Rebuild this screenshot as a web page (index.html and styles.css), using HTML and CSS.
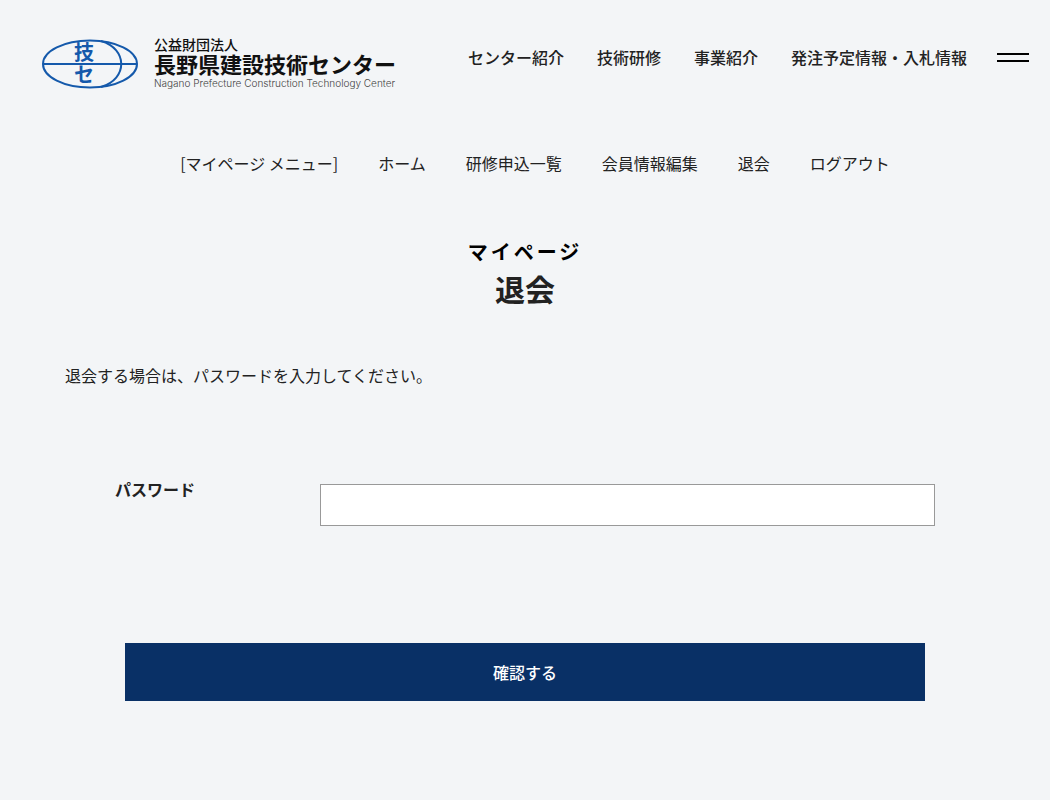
FILE: index.html
```html
<!DOCTYPE html>
<html lang="ja">
<head>
<meta charset="utf-8">
<meta name="viewport" content="width=device-width, initial-scale=1">
<title>退会 | マイページ</title>
<link rel="stylesheet" href="styles.css">
</head>
<body>
<header class="header">
  <a class="logo" href="#">
    <svg class="logo-mark" viewBox="0 0 98 50" width="98" height="50" aria-hidden="true">
      <g fill="none" stroke="#1459ab" stroke-width="2">
        <ellipse cx="49" cy="25" rx="47" ry="23.5"/>
        <path d="M2 25H96"/>
        <path d="M60 2C87 10 87 40 60 48"/>
      </g>
      <text class="logo-char" x="43" y="21">技</text>
      <text class="logo-char" x="43" y="43">セ</text>
    </svg>
    <span class="logo-text">
      <span class="logo-type">公益財団法人</span>
      <span class="logo-name">長野県建設技術センター</span>
      <span class="logo-en">Nagano Prefecture Construction Technology Center</span>
    </span>
  </a>
  <nav class="global-nav" aria-label="メイン">
    <a href="#">センター紹介</a>
    <a href="#">技術研修</a>
    <a href="#">事業紹介</a>
    <a href="#">発注予定情報・入札情報</a>
  </nav>
  <button class="menu-button" type="button" aria-label="メニュー"><span></span><span></span></button>
</header>
<nav class="mypage-nav" aria-label="マイページ">
  <span>[マイページ メニュー]</span>
  <a href="#">ホーム</a>
  <a href="#">研修申込一覧</a>
  <a href="#">会員情報編集</a>
  <a href="#">退会</a>
  <a href="#">ログアウト</a>
</nav>
<main class="main">
  <div class="heading">
    <p class="heading-sub">マイページ</p>
    <h1 class="heading-title">退会</h1>
  </div>
  <p class="lead">退会する場合は、パスワードを入力してください。</p>
  <form class="form">
    <div class="field">
      <label class="field-label" for="password">パスワード</label>
      <input class="field-input" id="password" type="password">
    </div>
    <button class="submit" type="submit">確認する</button>
  </form>
</main>
</body>
</html>
```
FILE: styles.css
```css
* {
  box-sizing: border-box;
}

body {
  margin: 0;
  background: #f3f5f7;
  color: #222;
  font-family: "Noto Sans CJK JP", sans-serif;
  font-size: 16px;
  line-height: 24px;
}

a {
  color: inherit;
  text-decoration: none;
}

p,
h1 {
  margin: 0;
}

.header {
  display: flex;
  align-items: flex-start;
  padding: 38px 21px 0 41px;
}

.logo {
  display: flex;
  gap: 15px;
  color: #111;
}

.logo-mark {
  flex: none;
  margin-top: 1px;
}

.logo-char {
  fill: #1459ab;
  font-size: 20px;
  font-weight: 700;
  text-anchor: middle;
}

.logo-text {
  display: flex;
  flex-direction: column;
  white-space: nowrap;
}

.logo-type {
  font-size: 14px;
  font-weight: 500;
  line-height: 12px;
}

.logo-name {
  font-size: 22px;
  font-weight: 700;
  line-height: 26px;
}

.logo-en {
  color: #444;
  font-family: Inter, sans-serif;
  font-size: 10px;
  font-weight: 300;
  line-height: 14px;
}

.global-nav {
  display: flex;
  gap: 33px;
  margin: 7px 30px 0 auto;
  font-weight: 500;
  white-space: nowrap;
}

.menu-button {
  display: flex;
  flex-direction: column;
  gap: 5px;
  width: 32px;
  margin-top: 15px;
  padding: 0;
  border: 0;
  background: none;
}

.menu-button span {
  width: 100%;
  height: 2px;
  background: #000;
}

.mypage-nav {
  display: flex;
  justify-content: center;
  gap: 40px;
  margin-top: 61px;
  padding-left: 20px;
}

.main {
  max-width: 960px;
  margin: 0 auto;
  padding: 65px 20px;
}

.heading {
  text-align: center;
}

.heading-sub {
  color: #000;
  font-size: 20px;
  font-weight: 700;
  letter-spacing: 3px;
}

.heading-title {
  font-size: 30px;
  font-weight: 700;
  line-height: 48px;
}

.lead {
  margin-top: 51px;
}

.form {
  padding: 90px 50px 0;
}

.field {
  display: grid;
  grid-template-columns: 205px 1fr;
  align-items: start;
}

.field-label {
  font-weight: 700;
}

.field-input {
  width: 100%;
  height: 42px;
  margin-top: 7px;
  padding: 0 10px;
  border: 1px solid #999;
  border-radius: 0;
  background: #fff;
  font: inherit;
}

.submit {
  display: block;
  width: 800px;
  max-width: 100%;
  margin: 117px auto 0;
  padding: 17px;
  border: 0;
  background: #093066;
  color: #fff;
  font: inherit;
  font-weight: 500;
}
```
